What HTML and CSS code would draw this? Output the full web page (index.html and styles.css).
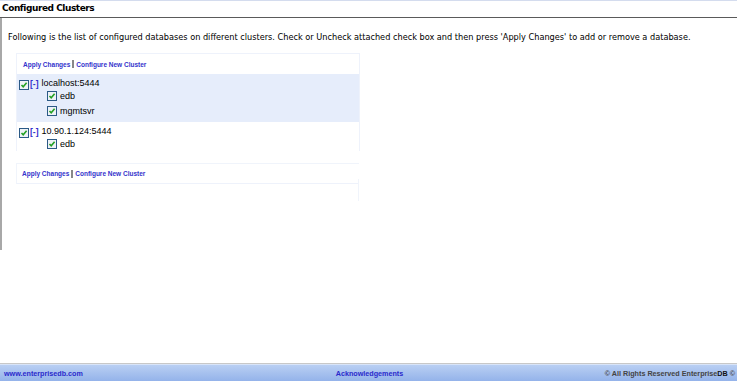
FILE: index.html
```html
<!DOCTYPE html>
<html>
<head>
<meta charset="utf-8">
<link rel="stylesheet" href="styles.css">
</head>
<body>
<div class="page">
  <div class="title">Configured Clusters</div>
  <div class="content">
    <p class="intro">Following is the list of configured databases on different clusters. Check or Uncheck attached check box and then press 'Apply Changes' to add or remove a database.</p>
    <div class="panel">
      <div class="links"><a>Apply Changes</a><span class="sep"></span><a>Configure New Cluster</a></div>
      <div class="cluster hl">
        <div class="crow">
          <svg class="cb" viewBox="0 0 10 10"><rect x="0.5" y="0.5" width="9" height="9" fill="#eef2f6" stroke="#2b5a86"/><path d="M2.5 5 L4.2 6.8 L7.6 2.8" fill="none" stroke="#23a023" stroke-width="1.6"/></svg>
          <span class="tog">[-]</span><span class="name">localhost:5444</span>
        </div>
        <div class="drow"><svg class="cb" viewBox="0 0 10 10"><rect x="0.5" y="0.5" width="9" height="9" fill="#eef2f6" stroke="#2b5a86"/><path d="M2.5 5 L4.2 6.8 L7.6 2.8" fill="none" stroke="#23a023" stroke-width="1.6"/></svg><span class="name">edb</span></div>
        <div class="drow"><svg class="cb" viewBox="0 0 10 10"><rect x="0.5" y="0.5" width="9" height="9" fill="#eef2f6" stroke="#2b5a86"/><path d="M2.5 5 L4.2 6.8 L7.6 2.8" fill="none" stroke="#23a023" stroke-width="1.6"/></svg><span class="name">mgmtsvr</span></div>
      </div>
      <div class="cluster">
        <div class="crow">
          <svg class="cb" viewBox="0 0 10 10"><rect x="0.5" y="0.5" width="9" height="9" fill="#eef2f6" stroke="#2b5a86"/><path d="M2.5 5 L4.2 6.8 L7.6 2.8" fill="none" stroke="#23a023" stroke-width="1.6"/></svg>
          <span class="tog">[-]</span><span class="name">10.90.1.124:5444</span>
        </div>
        <div class="drow"><svg class="cb" viewBox="0 0 10 10"><rect x="0.5" y="0.5" width="9" height="9" fill="#eef2f6" stroke="#2b5a86"/><path d="M2.5 5 L4.2 6.8 L7.6 2.8" fill="none" stroke="#23a023" stroke-width="1.6"/></svg><span class="name">edb</span></div>
      </div>
    </div>
    <div class="panel2">
      <div class="links"><a>Apply Changes</a><span class="sep"></span><a>Configure New Cluster</a></div>
    </div>
    <div class="panel3"></div>
  </div>
  <div class="spacer"></div>
  <div class="footer">
    <a class="f-left">www.enterprisedb.com</a>
    <a class="f-mid">Acknowledgements</a>
    <span class="f-right">© All Rights Reserved Enterprise<b>DB</b> ©</span>
  </div>
</div>
</body>
</html>
```

FILE: styles.css
```css
html, body { margin: 0; padding: 0; background: #fff; }
.page {
  height: 381px;
  display: flex;
  flex-direction: column;
  font-family: "DejaVu Sans", Verdana, sans-serif;
  color: #000;
}
.title {
  height: 16px;
  border-top: 1px solid #d4dcee;
  border-bottom: 1px solid #5a5a5a;
  font-weight: bold;
  font-size: 9px;
  letter-spacing: -0.45px;
  line-height: 14px;
  padding-left: 2px;
}
.content {
  border-left: 2px solid #a8a8a8;
  height: 232px;
  padding-left: 14px;
}
.intro {
  margin: 13px 0 0 -8px;
  font-family: "DejaVu Sans Condensed", "DejaVu Sans", sans-serif;
  font-stretch: condensed;
  font-size: 9.1px;
  line-height: 13px;
  white-space: nowrap;
}
.panel {
  margin-top: 9px;
  width: 342px;
  border: 1px solid #eef2fb;
  border-bottom: none;
}
.links {
  height: 20px;
  display: flex;
  align-items: center;
  padding-left: 6px;
  font-family: "Liberation Sans", Arial, sans-serif;
  font-size: 6.5px;
  font-weight: bold;
  color: #3333cc;
}
.links a { color: #3333cc; }
.sep {
  display: inline-block;
  width: 2px;
  height: 8px;
  background: #888;
  margin: 0 2px;
}
.cluster { padding: 3px 0 0 2px; }
.cluster.hl { background: #e6edfb; padding-bottom: 4px; }
.crow, .drow {
  display: flex;
  align-items: center;
  font-family: "Liberation Sans", Arial, sans-serif;
  font-size: 9px;
  color: #000;
}
.crow { height: 12px; }
.drow { height: 14px; padding-left: 28px; }
.hl .drow + .drow { margin-top: 1px; }
.cb { width: 10px; height: 10px; flex: none; }
.crow .cb { margin-top: 3px; }
.tog {
  color: #3333cc;
  font-size: 8.5px;
  font-weight: bold;
  margin: 2px 3px 0 1px;
  font-family: "Liberation Sans", Arial, sans-serif;
}
.drow .name { margin-left: 3px; }
.panel2 {
  margin-top: 12px;
  height: 19px;
  width: 342px;
  border-top: 1px solid #f0f4fb;
  border-left: 1px solid #f0f4fb;
  border-bottom: 1px solid #eef2fb;
}
.panel2 .links { height: 19px; padding-left: 5px; }
.panel3 {
  margin-top: -5px;
  width: 342px;
  height: 22px;
  border-right: 1px solid #f0f4fb;
}
.spacer { flex: 1; border-bottom: 1px solid #c8c8c8; }
.footer {
  height: 16px;
  background: linear-gradient(#b9cff3, #94b3ea);
  border-top: 1px solid #d8e4f8;
  display: grid;
  grid-template-columns: 1fr auto 1fr;
  align-items: center;
  padding: 0 2px 0 4px;
  font-family: "Liberation Sans", Arial, sans-serif;
  font-size: 7.2px;
  font-weight: bold;
  color: #2a2acc;
}
.footer a { color: #2a2acc; }
.f-right { justify-self: end; color: #444; }
.f-right b { color: #111; }
```
